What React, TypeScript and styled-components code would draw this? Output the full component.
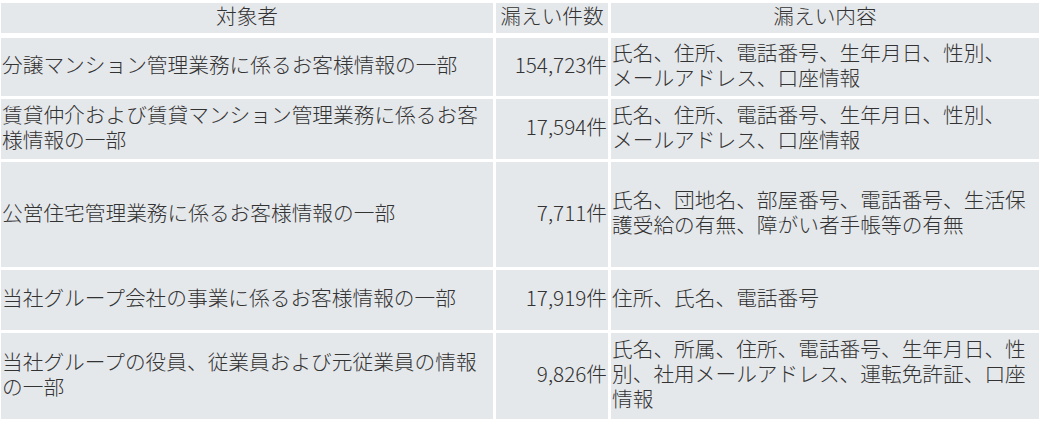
import React from "react";
import styled, { createGlobalStyle } from "styled-components";

const Global = createGlobalStyle`
  html, body { margin: 0; padding: 0; background: #ffffff; }
  body {
    font-family: "Noto Sans CJK JP", "Noto Sans", sans-serif;
    color: #333333;
  }
`;

const Table = styled.div`
  display: flex;
  flex-direction: column;
  gap: 3px;
  padding: 3px 3px 3px 1px;
  width: 1038px;
`;

const Row = styled.div<{ $h: number; $head?: boolean }>`
  display: grid;
  grid-template-columns: 492px 112px 428px;
  column-gap: 3px;
  height: ${(p) => p.$h}px;
  margin-bottom: ${(p) => (p.$head ? "2px" : "0")};
`;

const Cell = styled.div<{ $align?: "left" | "center" | "right" }>`
  background: #e5e8eb;
  display: flex;
  align-items: center;
  justify-content: ${(p) =>
    p.$align === "center" ? "center" : p.$align === "right" ? "flex-end" : "flex-start"};
  text-align: ${(p) => p.$align || "left"};
  font-size: 20.7px;
  font-weight: 300;
  line-height: 25px;
  padding: 0 1px 5px 1px;
  white-space: normal;
  word-break: break-all;
  line-break: strict;
`;

const Text = styled.span`
  display: block;
  width: 100%;
`;

const Keep = styled.span`
  white-space: nowrap;
`;

type Item = { target: string; count: string; content: React.ReactNode; h: number };

const items: Item[] = [
  {
    target: "分譲マンション管理業務に係るお客様情報の一部",
    count: "154,723件",
    content: (
      <>
        氏名、住所、電話番号、生年月日、性別、<Keep>メールアドレス</Keep>、口座情報
      </>
    ),
    h: 58,
  },
  {
    target: "賃貸仲介および賃貸マンション管理業務に係るお客様情報の一部",
    count: "17,594件",
    content: (
      <>
        氏名、住所、電話番号、生年月日、性別、<Keep>メールアドレス</Keep>、口座情報
      </>
    ),
    h: 60,
  },
  {
    target: "公営住宅管理業務に係るお客様情報の一部",
    count: "7,711件",
    content: "氏名、団地名、部屋番号、電話番号、生活保護受給の有無、障がい者手帳等の有無",
    h: 105,
  },
  {
    target: "当社グループ会社の事業に係るお客様情報の一部",
    count: "17,919件",
    content: "住所、氏名、電話番号",
    h: 60,
  },
  {
    target: "当社グループの役員、従業員および元従業員の情報の一部",
    count: "9,826件",
    content: "氏名、所属、住所、電話番号、生年月日、性別、社用メールアドレス、運転免許証、口座情報",
    h: 86,
  },
];

export default function App() {
  return (
    <>
      <Global />
      <Table>
        <Row $h={30} $head>
          <Cell $align="center">
            <Text>対象者</Text>
          </Cell>
          <Cell $align="center">
            <Text>漏えい件数</Text>
          </Cell>
          <Cell $align="center">
            <Text>漏えい内容</Text>
          </Cell>
        </Row>
        {items.map((it) => (
          <Row key={it.target} $h={it.h}>
            <Cell>
              <Text>{it.target}</Text>
            </Cell>
            <Cell $align="right">
              <Text>{it.count}</Text>
            </Cell>
            <Cell>
              <Text>{it.content}</Text>
            </Cell>
          </Row>
        ))}
      </Table>
    </>
  );
}
